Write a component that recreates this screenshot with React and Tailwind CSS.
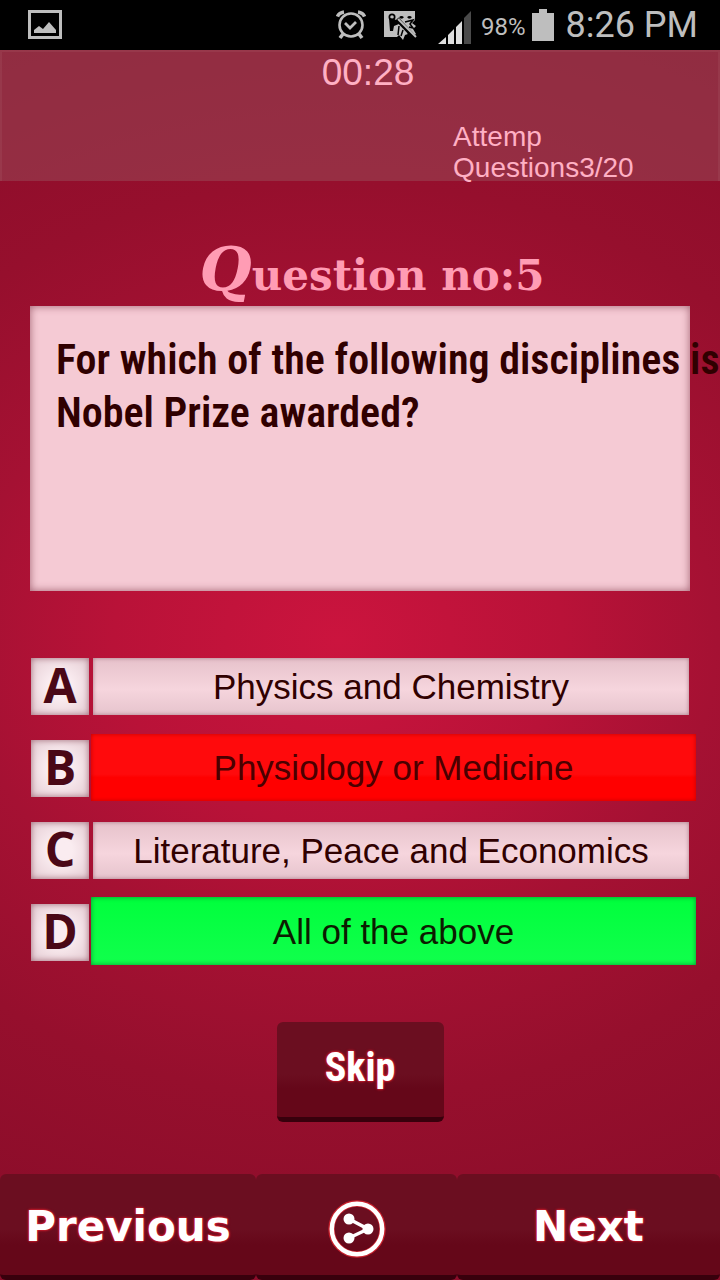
/**
 * Quiz screen: timer header, question card, four answers, skip and bottom nav.
 */

const options = [
  { letter: "A", text: "Physics and Chemistry", state: "idle" },
  { letter: "B", text: "Physiology or Medicine", state: "wrong" },
  { letter: "C", text: "Literature, Peace and Economics", state: "idle" },
  { letter: "D", text: "All of the above", state: "correct" },
];

function barClass(state) {
  if (state === "wrong") {
    return "-mt-[6px] -mb-1 -ml-[2px] -mr-[7px] bg-linear-to-b from-[#ff0a0c] from-60% to-[#ff0000] to-65% text-[#4a0000] shadow-[inset_0_0_4px_#c00000]";
  }
  if (state === "correct") {
    return "-mt-[7px] -mb-1 -ml-[2px] -mr-[7px] bg-linear-to-b from-[#00ff3c] to-[#10ff4c] text-[#0c1c00] shadow-[inset_0_0_5px_#089030]";
  }
  return "bg-linear-to-b from-[#e6c2cb] via-[#f6d5dd] via-55% to-[#e6c4cd] text-[#300000] shadow-[inset_0_0_4px_#a87884]";
}

function PictureIcon() {
  return (
    <svg width="34" height="30" viewBox="0 0 34 30" aria-hidden="true">
      <rect x="1.5" y="1.5" width="31" height="26" fill="none" stroke="#bebebe" strokeWidth="3" />
      <path d="M6 23v-3l5-4 4 3 6-7 7 8v3z" fill="#bebebe" />
    </svg>
  );
}

function AlarmIcon() {
  return (
    <svg width="30" height="30" viewBox="0 0 30 30" fill="none" stroke="#bebebe" aria-hidden="true">
      <circle cx="15" cy="15" r="11.5" strokeWidth="2.6" />
      <path d="M9 13l5 5 6-6" strokeWidth="2.8" />
      <path d="M1.5 6.5C2.5 4 4.5 2.5 8 2M28.5 6.5C27.5 4 25.5 2.5 22 2" strokeWidth="3.6" />
      <path d="M7 24l-3 4M23 24l3 4" strokeWidth="3.6" />
    </svg>
  );
}

function MotionOffIcon() {
  return (
    <svg width="34" height="30" viewBox="0 0 34 30" aria-hidden="true">
      <path d="M0 1h31v9l-3 3 4 3-3 3 3 5-4 3-4-3-3 1-2 5-4-5-2 2H0z" fill="#bebebe" />
      <circle cx="8" cy="7" r="3.5" fill="#000" />
      <circle cx="8" cy="7" r="1.8" fill="#bebebe" />
      <path d="M5 8l1 13h3l1-5 5-2-1-3-4-2z" fill="#000" />
      <path d="M16 8a2 2 0 0 1 3 0M24 8a2 2 0 0 1 3 0" stroke="#000" strokeWidth="2.5" fill="none" />
      <path d="M21 12l8-2-3 4 3 4-4-1M15 16l-1 9M19 20l-2 6M24 22l1 4" stroke="#000" strokeWidth="1.5" fill="none" />
      <path d="M13 9l18 19" stroke="#000" strokeWidth="4.5" />
      <path d="M14 9l18 18" stroke="#bebebe" strokeWidth="2" />
    </svg>
  );
}

function SignalIcon() {
  return (
    <svg width="33" height="33" viewBox="0 0 33 33" aria-hidden="true">
      <path d="M0 33l8-7v7zM10 33V24l6-6v15zM18 33V16l6-6v23z" fill="#dedede" />
      <path d="M26 33V7l7-7v33z" fill="#4a4a4a" />
    </svg>
  );
}

function BatteryIcon() {
  return (
    <svg width="22" height="32" viewBox="0 0 22 32" aria-hidden="true">
      <path d="M7 0h8v4h7v28H0V4h7z" fill="#bebebe" />
    </svg>
  );
}

function ShareIcon() {
  return (
    <svg width="58" height="58" viewBox="0 0 58 58" aria-hidden="true">
      <circle cx="29" cy="29" r="25.5" fill="none" stroke="#c8202c" strokeWidth="6.5" />
      <circle cx="29" cy="29" r="25.2" fill="none" stroke="#fff" strokeWidth="4.5" />
      <path d="M21 19l19 10-19 9" fill="none" stroke="#fff" strokeWidth="3.5" />
      <g fill="#fff">
        <circle cx="21" cy="19" r="5.5" />
        <circle cx="40" cy="29" r="5.5" />
        <circle cx="21" cy="38" r="5.5" />
      </g>
    </svg>
  );
}

function StatusBar() {
  return (
    <div className="flex h-[50px] items-center bg-black pl-7 pr-[22px] text-[#bebebe] font-[Roboto,sans-serif]">
      <PictureIcon />
      <div className="ml-auto flex items-center">
        <AlarmIcon />
        <span className="ml-[18px]"><MotionOffIcon /></span>
        <span className="ml-5 mt-1"><SignalIcon /></span>
        <span className="ml-[10px] mt-1 text-[24px] leading-none">98%</span>
        <span className="ml-[6px]"><BatteryIcon /></span>
        <span className="ml-3 text-[36px] leading-none">8:26 PM</span>
      </div>
    </div>
  );
}

function Option({ letter, text, state }) {
  return (
    <button type="button" className="flex h-[57px] w-full gap-1">
      <span className="flex w-[58px] shrink-0 items-center justify-center bg-radial from-[#faecf0] from-30% to-[#e4ccd3] pb-1 text-[48px] leading-none font-bold text-[#4a0816] shadow-[inset_0_0_6px_#a06a78] font-['Open_Sans',sans-serif]">
        {letter}
      </span>
      <span className={`flex flex-1 items-center justify-center whitespace-nowrap text-[35px] leading-none ${barClass(state)}`}>
        {text}
      </span>
    </button>
  );
}

const navButton =
  "flex items-center justify-center rounded-md border-b-[5px] border-[#38000c] bg-linear-to-b from-[#6b0e20] from-55% to-[#650719] to-70%";
const glowText =
  "text-white leading-none font-bold [text-shadow:0_0_3px_#f02030,0_0_2px_#f02030]";

export default function App() {
  return (
    <div className="flex min-h-screen flex-col overflow-hidden bg-[#850c27] font-['Liberation_Sans',Arial,sans-serif]">
      <StatusBar />
      <main className="flex flex-1 flex-col bg-[radial-gradient(ellipse_125%_60%_at_47%_48%,#cb143e_0%,#b91238_25%,#a51133_42%,#960f2d_62%,#8c0d2a_85%,#850c27_100%)]">
        <header className="h-[131px] border-x-2 border-t-2 border-white/5 bg-[#9a5560]/45 text-[#ffb0c4]">
          <p className="pl-4 text-center text-[37px] leading-[41px]">00:28</p>
          <p className="ml-[63%] mt-[28px] text-[28px] leading-[31px]">
            Attemp
            <br />
            Questions3/20
          </p>
        </header>

        <h1 className="mt-[58px] h-[67px] pl-6 text-center text-[42px] leading-[65px] font-bold text-[#ff9cb4] font-['DejaVu_Serif',serif]">
          <span className="text-[60px] leading-none italic">Q</span>uestion no:5
        </h1>

        <section className="mx-[30px] h-[285px] bg-[#f5cad4] px-[26px] pt-[27px] shadow-[inset_0_0_8px_#a06070]">
          <p className="whitespace-nowrap text-[42px] leading-[53px] font-semibold text-[#300000] font-['Roboto_Condensed','Arial_Narrow',sans-serif]">
            For which of the following disciplines is
            <br />
            Nobel Prize awarded?
          </p>
        </section>

        <div className="mt-[67px] flex flex-col gap-[25px] px-[31px]">
          {options.map((o) => (
            <Option key={o.letter} {...o} />
          ))}
        </div>

        <button
          type="button"
          className={`${navButton} ${glowText} mx-auto mt-[61px] h-[100px] w-[167px] pb-1 text-[40px] font-['Roboto_Condensed',sans-serif]`}
        >
          Skip
        </button>

        <nav className="mt-auto grid h-[106px] grid-cols-[256fr_201fr_263fr]">
          <button type="button" className={`${navButton} ${glowText} pt-1 text-[42px] font-['DejaVu_Sans',sans-serif]`}>
            Previous
          </button>
          <button type="button" aria-label="Share" className={`${navButton} pt-2`}>
            <ShareIcon />
          </button>
          <button type="button" className={`${navButton} ${glowText} pt-1 text-[42px] font-['DejaVu_Sans',sans-serif]`}>
            Next
          </button>
        </nav>
      </main>
    </div>
  );
}
